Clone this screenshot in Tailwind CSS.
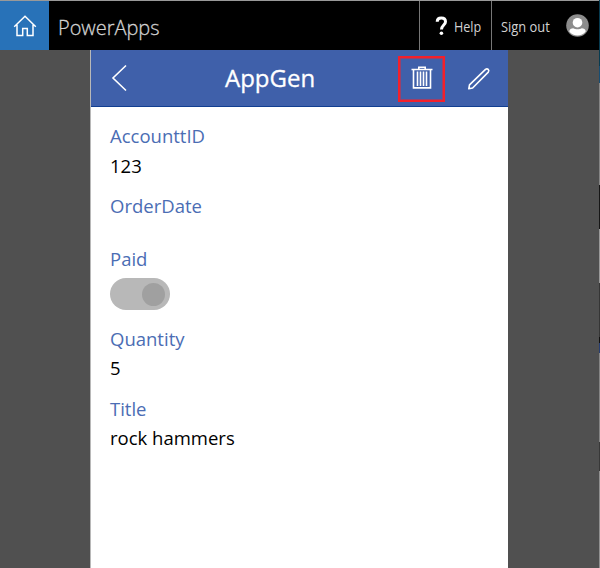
<!DOCTYPE html>
<html lang="en">
<head>
<meta charset="utf-8">
<title>PowerApps</title>
<script src="https://cdn.jsdelivr.net/npm/@tailwindcss/browser@4"></script>
</head>
<body class="w-[600px] h-[568px] overflow-hidden bg-[#505050] font-['Open_Sans','Noto_Sans',sans-serif]">
<div class="flex w-[600px] h-[568px]">
  <div class="flex w-[599px] flex-col">
    <header class="flex h-[50px] shrink-0 border-t border-[#999] bg-black text-[#d2d2d2]">
      <a class="flex w-[49px] items-center justify-center bg-[#2872b8]">
        <svg class="h-[24px] w-[24px]" viewBox="0 0 24 24" fill="none" stroke="#fff" stroke-width="1.5"><path d="M1.2 12.7 12 2.3l10.8 10.4M4 10.8v10.6h5.7v-7h4.6v7H20V10.8"/></svg>
      </a>
      <div class="flex flex-1 items-center pl-[9px] pt-[3px]"><span class="origin-left scale-x-[0.95] whitespace-nowrap text-[21px] font-light leading-[28px] [-webkit-text-stroke:0.3px_#d2d2d2]">PowerApps</span></div>
      <div class="flex w-[72px] items-center border-l border-[#777] pl-[15px]">
        <svg class="h-[20px] w-[13px] shrink-0" viewBox="0 0 13 20" fill="none" stroke="#fff" stroke-width="3"><path d="M2.2 5.7C2.2 3.3 4 2 6.3 2s4.2 1.3 4.2 3.7c0 3.2-4 3.5-4 7.8"/><circle cx="6.4" cy="17.3" r="1.8" fill="#fff" stroke="none"/></svg>
        <span class="ml-[6px] mt-[2px] origin-left scale-x-[0.9] text-[14px]">Help</span>
      </div>
      <div class="flex w-[108px] items-center border-l border-[#777] pl-[9px]">
        <span class="mt-[2px] w-[65px] origin-left scale-x-[0.92] whitespace-nowrap text-[14px]">Sign out</span>
        <svg class="h-[23px] w-[23px] shrink-0" viewBox="0 0 23 23"><circle cx="11.5" cy="11.5" r="11.3" fill="#8c8c8c"/><circle cx="11.5" cy="8.7" r="4.8" fill="#fff"/><path d="M3.3 17.4c0-2.3 2-3.2 4-3.2 2 1.4 6.4 1.4 8.4 0 2 0 4 .9 4 3.2-3.6 5.4-12.8 5.4-16.4 0Z" fill="#fff"/></svg>
      </div>
    </header>
    <main class="ml-[90px] flex w-[418px] flex-1 flex-col border-l border-[#b8b8b8] bg-white">
      <div class="flex h-[57px] shrink-0 items-center border-b border-[#123f91] bg-[#3f60aa]">
        <svg class="ml-[20px] h-[28px] w-[17px]" viewBox="0 0 17 28" fill="none" stroke="#fff" stroke-width="1.6"><path d="M15 1.5 2 14l13 12.5"/></svg>
        <h1 class="ml-[97px] w-[173px] text-[24px] leading-[32px] text-white [-webkit-text-stroke:0.3px_#fff]">AppGen</h1>
        <div class="mt-[2px] flex h-[46px] w-[47px] shrink-0 items-center justify-center border-2 border-[#f3202b] ring-1 ring-inset ring-[#f3202b]/50">
          <svg class="h-[24px] w-[22px] -translate-y-px" viewBox="0 0 22 24" fill="none" stroke="#fff" stroke-width="1.6"><path d="M.5 3.5h21M7.8 3V1.3h6.4V3M2.5 4v17.9h17V4M6.5 5.5v14.5M9.5 5.5v14.5M12.5 5.5v14.5M15.5 5.5v14.5"/></svg>
        </div>
        <svg class="ml-[22px] mt-[2px] h-[24px] w-[24px]" viewBox="0 0 24 24" fill="none" stroke="#fff" stroke-width="1.6" stroke-linejoin="round"><path d="m1.8 21.8.7-4L18.5 2.4c2-1.5 4.2.7 2.8 2.7L5.6 21 1.8 21.8Z"/></svg>
      </div>
      <dl class="px-[19px] pt-[14px] text-[18.5px] leading-[30px] text-black">
        <dt class="text-[#4b6db4]">AccounttID</dt>
        <dd>123</dd>
        <dt class="mt-[10px] text-[#4b6db4]">OrderDate</dt>
        <dt class="mt-[23px] text-[#4b6db4]">Paid</dt>
        <dd class="mt-[4px] flex h-[32px] w-[60px] items-center justify-end rounded-full bg-[#b8b8b8] pr-[5px]"><span class="h-[23px] w-[23px] rounded-full bg-[#a0a0a0]"></span></dd>
        <dt class="mt-[14px] text-[#4b6db4]">Quantity</dt>
        <dd class="-mt-px pb-px">5</dd>
        <dt class="mt-[10px] text-[#4b6db4]">Title</dt>
        <dd class="-mt-px">rock hammers</dd>
      </dl>
    </main>
  </div>
  <div class="flex w-px flex-col bg-[#909090]">
    <div class="h-[66px] bg-[#073b50]"></div><div class="h-[17px] bg-[#174d72]"></div><div class="h-[102px] bg-[#858585]"></div><div class="h-[44px] bg-[#161616]"></div><div class="h-[54px] bg-[#999]"></div><div class="h-[54px] bg-[#353535]"></div><div class="h-[6px] bg-[#111]"></div><div class="h-[10px] bg-[#283e70]"></div><div class="h-[89px] bg-[#858585]"></div><div class="h-[29px] bg-[#383838]"></div>
  </div>
</div>
</body>
</html>
